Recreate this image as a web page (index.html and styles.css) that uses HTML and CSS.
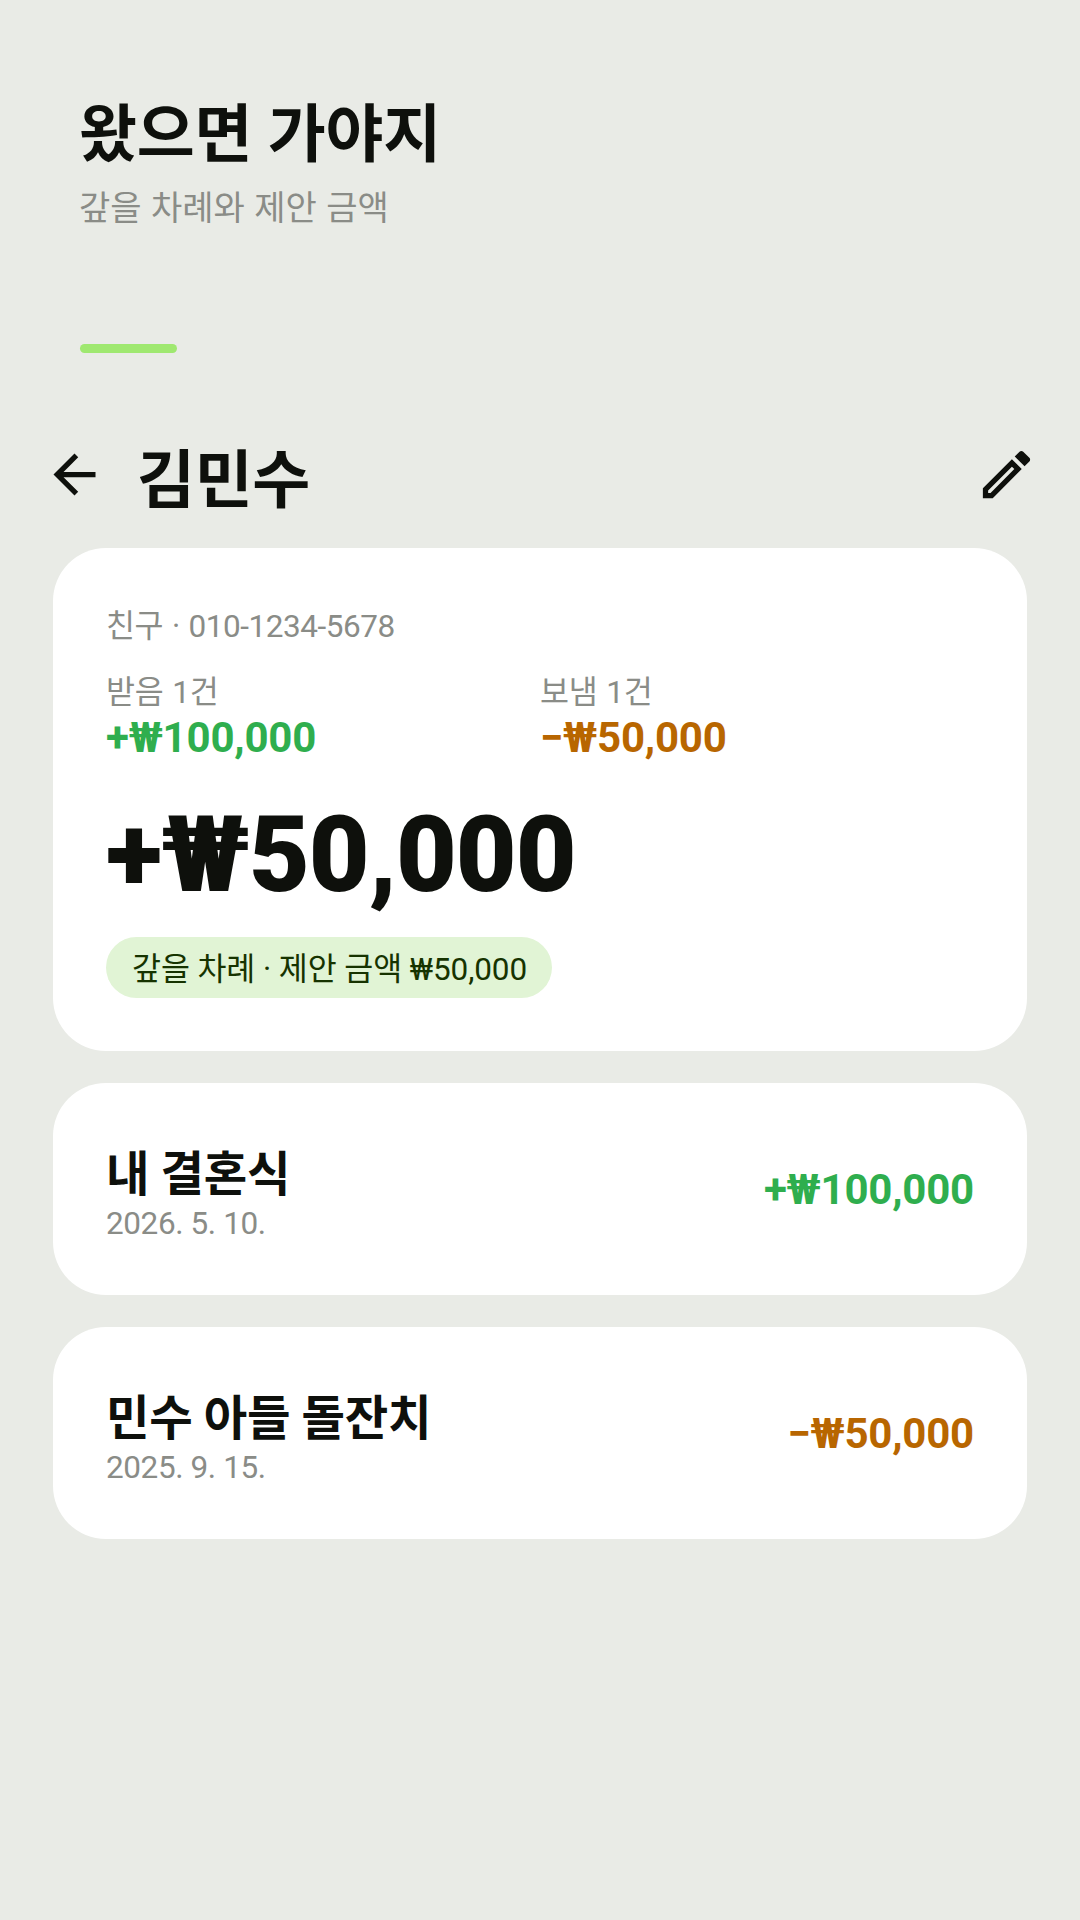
FILE: index.html
```html
<!DOCTYPE html>
<html lang="ko">
    <head>
        <title>왔으면 가야지</title>
        <meta charset="UTF-8">
        <meta name="viewport" content="width=device-width, initial-scale=1">
        <link rel="stylesheet" href="styles.css">
    </head>
    <body>
        <header class="app-header">
            <h1>왔으면 가야지</h1>
            <p>갚을 차례와 제안 금액</p>
            <div class="accent-bar"></div>
        </header>

        <div class="person-bar">
            <svg class="icon" viewBox="0 0 24 24">
                <path d="M20 11H7.83l5.59-5.59L12 4l-8 8 8 8 1.41-1.41L7.83 13H20v-2z"/>
            </svg>
            <h2>김민수</h2>
            <svg class="icon" viewBox="0 0 24 24">
                <path d="M3 17.25V21h3.75L17.81 9.94l-3.75-3.75L3 17.25zM5.92 19H5v-.92l9.06-9.06.92.92L5.92 19zM20.71 5.63l-2.34-2.34c-.2-.2-.45-.29-.71-.29s-.51.1-.7.29l-1.83 1.83 3.75 3.75 1.83-1.83c.39-.39.39-1.02 0-1.41z"/>
            </svg>
        </div>

        <main class="cards">
            <section class="card summary">
                <div class="relation">친구 · 010-1234-5678</div>
                <div class="totals">
                    <div class="total">
                        <span class="total-label">받음 1건</span>
                        <span class="amount plus">+₩100,000</span>
                    </div>
                    <div class="total">
                        <span class="total-label">보냄 1건</span>
                        <span class="amount minus">−₩50,000</span>
                    </div>
                </div>
                <div class="balance">+₩50,000</div>
                <span class="chip">갚을 차례 · 제안 금액 ₩50,000</span>
            </section>

            <section class="card event">
                <div class="event-info">
                    <div class="event-name">내 결혼식</div>
                    <div class="event-date">2026. 5. 10.</div>
                </div>
                <span class="amount plus">+₩100,000</span>
            </section>

            <section class="card event">
                <div class="event-info">
                    <div class="event-name">민수 아들 돌잔치</div>
                    <div class="event-date">2025. 9. 15.</div>
                </div>
                <span class="amount minus">−₩50,000</span>
            </section>
        </main>
    </body>
</html>
```

FILE: styles.css
```css
html {
    box-sizing: border-box;
}
body {
    margin: 0;
    min-height: 1920px;
    background: #e9ebe6;
    color: #0e100c;
    font-family: Roboto, "Noto Sans CJK KR", sans-serif;
}
.app-header {
    padding: 93px 79px 0;
}
    .app-header h1 {
        margin: 0;
        font-size: 63px;
        line-height: 84px;
        letter-spacing: -0.2px;
        font-weight: 700;
    }
    .app-header p {
        margin: 8px 0 0;
        font-size: 34px;
        line-height: 46px;
        word-spacing: 1px;
        color: #8a8c87;
    }
.accent-bar {
    width: 97px;
    height: 9px;
    margin: 113px 0 0 1px;
    border-radius: 5px;
    background: #9fe870;
}
.person-bar {
    display: flex;
    align-items: center;
    height: 63px;
    margin-top: 90px;
    padding: 0 42px 0 43px;
}
    .person-bar h2 {
        margin: 0 0 0 31px;
        flex: 1;
        font-size: 63px;
        letter-spacing: -0.3px;
        font-weight: 700;
    }
.icon {
    width: 63px;
    height: 63px;
    fill: currentColor;
}
.cards {
    display: flex;
    flex-direction: column;
    gap: 32px;
    margin: 42px 53px 0;
}
.card {
    padding: 53px;
    border-radius: 53px;
    background: #fff;
}
.summary {
    padding-bottom: 53px;
}
.relation {
    font-size: 31.5px;
    line-height: 52px;
    letter-spacing: -0.45px;
    word-spacing: 1.5px;
    color: #8a8c87;
}
.totals {
    display: flex;
    margin-top: 18px;
}
.total {
    flex: 1;
    display: flex;
    flex-direction: column;
}
.total-label {
    font-size: 31.5px;
    line-height: 43px;
    letter-spacing: -0.3px;
    word-spacing: 1.5px;
    color: #8a8c87;
}
.amount {
    font-size: 42px;
    line-height: 48px;
    letter-spacing: -0.2px;
    font-weight: 700;
}
.plus {
    color: #2fae4e;
}
.minus {
    color: #b86600;
}
.balance {
    margin-top: 32px;
    font-size: 105px;
    line-height: 124px;
    letter-spacing: -1px;
    font-weight: 900;
}
.chip {
    display: inline-block;
    margin-top: 19px;
    padding: 5px 25px 0 26px;
    border-radius: 31px;
    background: #e1f4d5;
    color: #163300;
    font-size: 31.5px;
    line-height: 56px;
    letter-spacing: -0.1px;
}
.event {
    display: flex;
    justify-content: space-between;
    align-items: center;
    height: 212px;
    padding-top: 0;
    padding-bottom: 0;
    box-sizing: border-box;
}
.event .amount {
    padding-top: 2px;
}
.event-info {
    padding-top: 11px;
}
.event-name {
    font-size: 47.25px;
    line-height: 59px;
    letter-spacing: -0.3px;
    font-weight: 700;
}
.event-date {
    font-size: 31.5px;
    line-height: 38px;
    letter-spacing: -0.4px;
    color: #8a8c87;
}
```
